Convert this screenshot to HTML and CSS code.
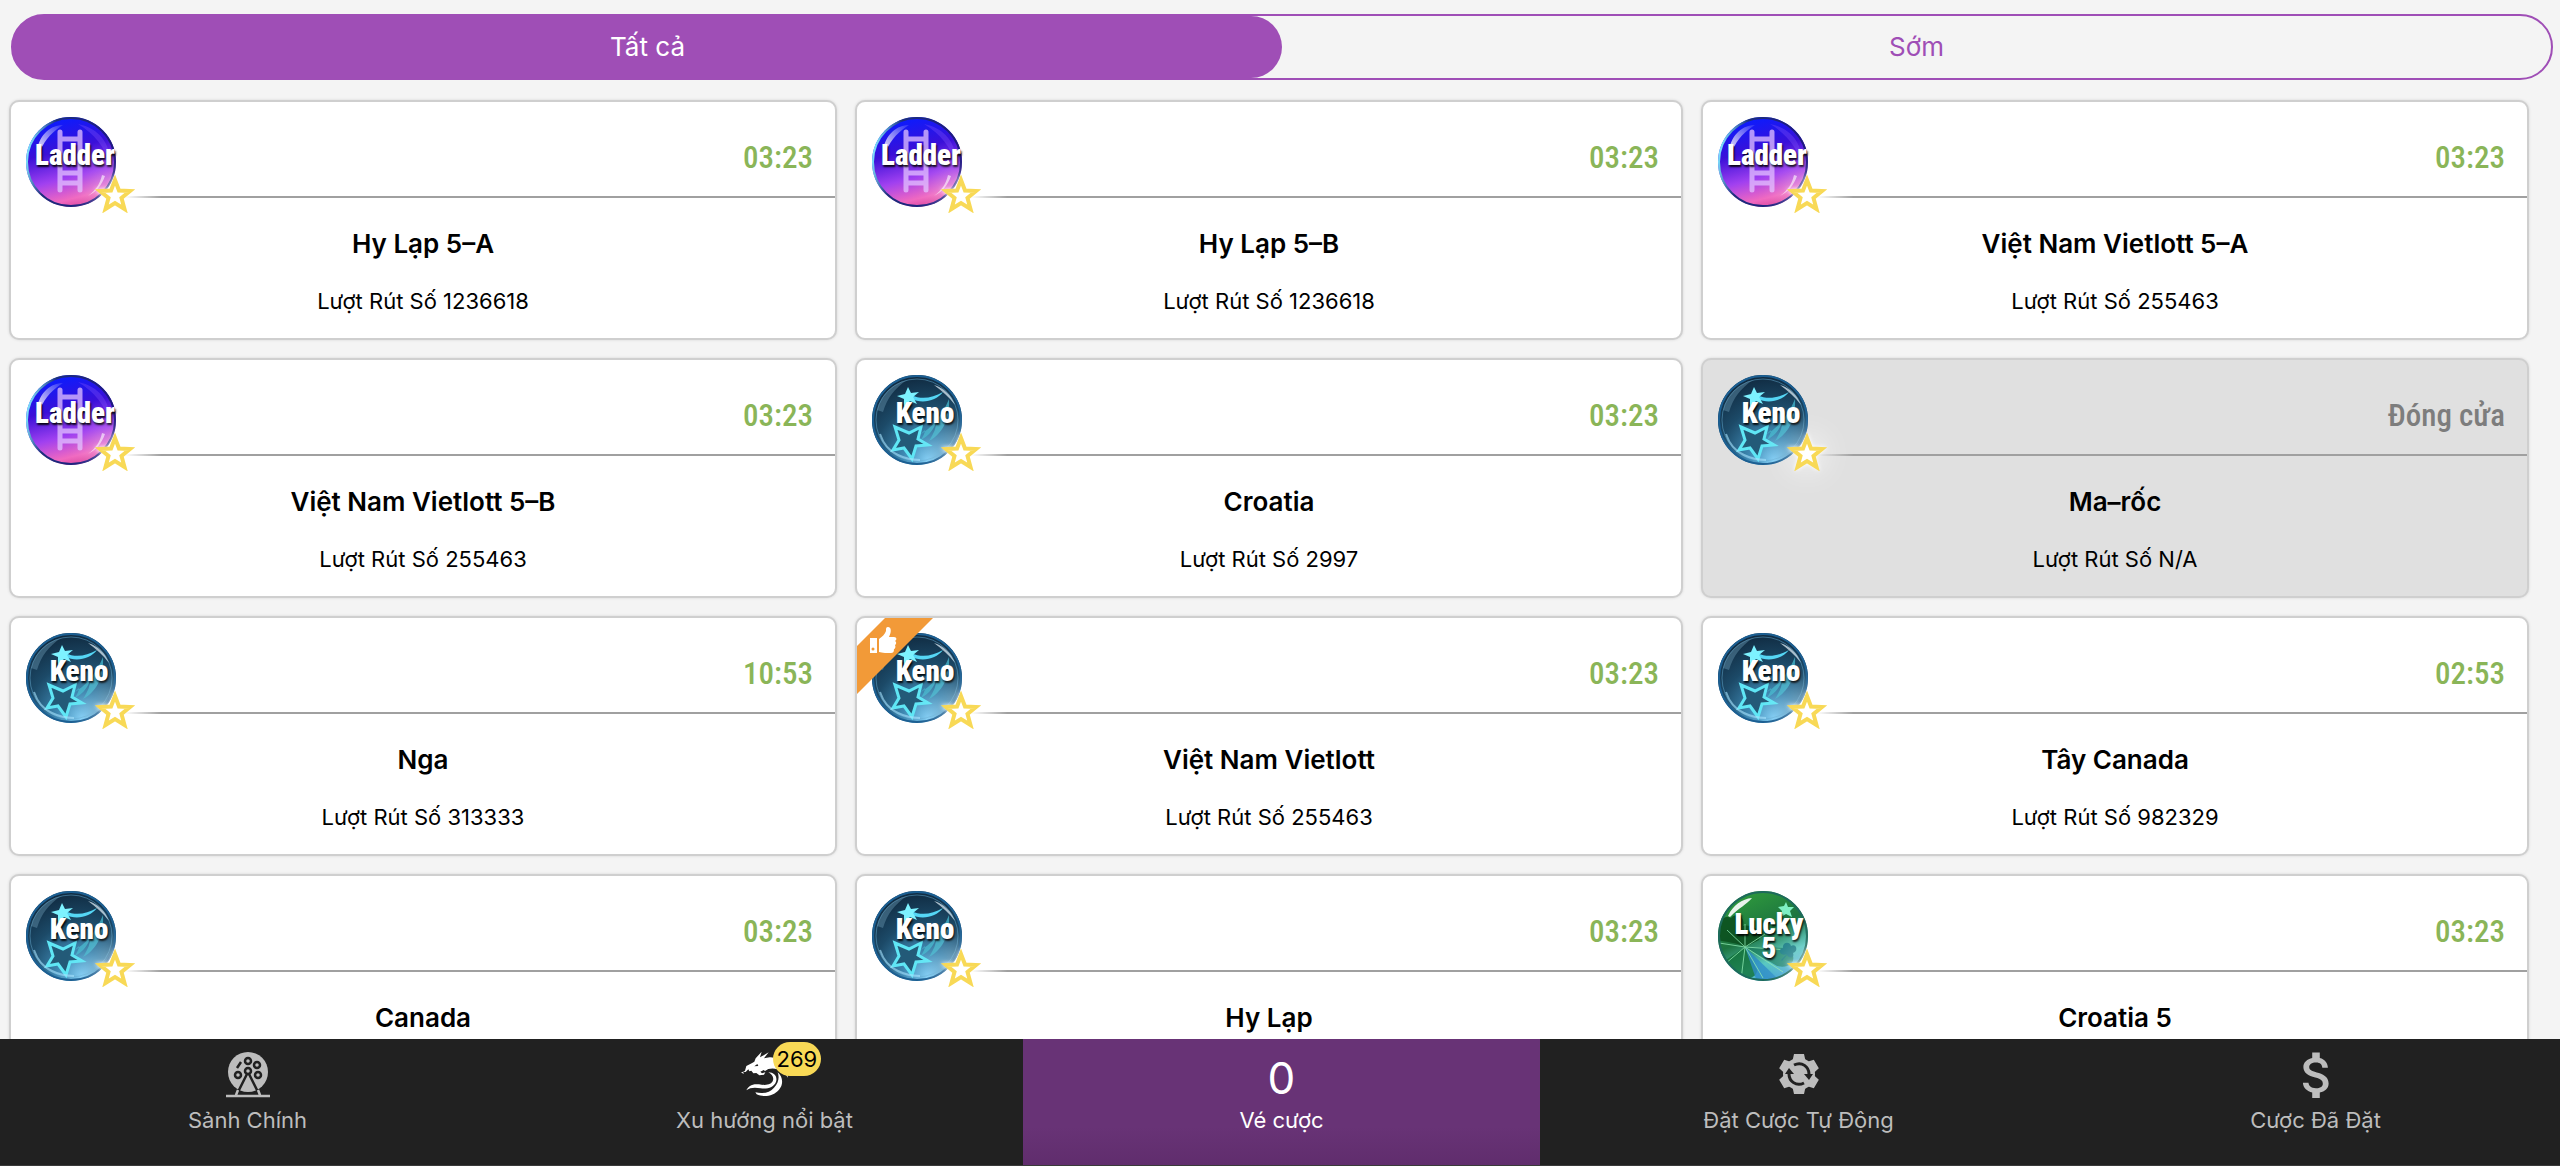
FILE: index.html
```html
<!DOCTYPE html>
<html lang="vi">
	<head>
		<meta charset="UTF-8" />
		<meta name="viewport" content="width=device-width, initial-scale=1.0" />
		<title>Xổ số</title>
		<link rel="stylesheet" href="styles.css">
	</head>
	<body>
		<!-- shared icons -->
		<svg class="sprite" aria-hidden="true">
			<defs>
				<linearGradient id="ladder-bg" x1="0.4" y1="0" x2="0.65" y2="1">
					<stop offset="0" stop-color="#0a1cff" />
					<stop offset="0.35" stop-color="#3a10d8" />
					<stop offset="0.65" stop-color="#a040f0" />
					<stop offset="0.88" stop-color="#f068c0" />
					<stop offset="1" stop-color="#d8409a" />
				</linearGradient>
				<radialGradient id="keno-bg" cx="0.62" cy="0.95" r="0.95">
					<stop offset="0" stop-color="#7fcdf5" />
					<stop offset="0.3" stop-color="#3d86b0" />
					<stop offset="0.65" stop-color="#1c4a68" />
					<stop offset="1" stop-color="#102a40" />
				</radialGradient>
				<linearGradient id="lucky-bg" x1="0.3" y1="0" x2="0.75" y2="1">
					<stop offset="0" stop-color="#2f9a3c" />
					<stop offset="0.45" stop-color="#1c7440" />
					<stop offset="0.75" stop-color="#58c8c0" />
					<stop offset="1" stop-color="#3a9ad8" />
				</linearGradient>
				<linearGradient id="rim" x1="0" y1="0.4" x2="1" y2="0.6">
					<stop offset="0" stop-color="#7fe4ff" />
					<stop offset="0.25" stop-color="#1c2f7c" />
					<stop offset="1" stop-color="#1d1680" />
				</linearGradient>
				<linearGradient id="shine" x1="0" y1="1" x2="1" y2="0">
					<stop offset="0" stop-color="#fff" stop-opacity="0.9" />
					<stop offset="1" stop-color="#fff" stop-opacity="0.1" />
				</linearGradient>
				<clipPath id="ball-clip"><circle cx="46" cy="46" r="44" /></clipPath>
			</defs>

			<symbol id="ball-ladder" viewBox="0 0 92 92">
				<circle cx="46" cy="46" r="45" fill="url(#ladder-bg)" />
				<circle cx="46" cy="46" r="44" fill="none" stroke="url(#rim)" stroke-width="2" />
				<path d="M53 8C74 12 86 28 85 48 80 32 70 18 53 8z" fill="#8a5cff" opacity="0.3" />
				<path d="M12 34C15 18 26 9 38 9 29 15 20 22 15 36z" fill="url(#shine)" />
				<path d="M80 60c-3 9-9 16-17 20 8-6 12-12 14-21z" fill="#fff" opacity="0.6" />
				<path d="M35 16v58M55 16v58M35 23h20M35 57h20M35 67h20" fill="none" stroke="#e3c2ff" stroke-width="5" stroke-linecap="round" opacity="0.75" />
			</symbol>

			<symbol id="ball-keno" viewBox="0 0 92 92">
				<circle cx="46" cy="46" r="45" fill="url(#keno-bg)" />
				<circle cx="46" cy="46" r="44" fill="none" stroke="#1c5f92" stroke-width="2" />
				<circle cx="46" cy="46" r="41" fill="none" stroke="#63a9cf" stroke-width="1" opacity="0.5" />
				<path d="M6 36C10 20 22 9 36 6 24 14 16 24 12 38z" fill="#5d8ba5" opacity="0.5" />
				<path d="M63 11c10 3 17 10 21 20-6-8-13-14-21-20z" fill="#e8f6ff" opacity="0.7" />
				<path d="M40 21c11 5 21 3 32-3-7 9-20 12-32 7z" fill="#55d6f5" />
				<path d="M37 13l3 6 8-1-6 5 4 7-7-3-6 6 0-8-7-3 8-2z" fill="#7df2ff" />
				<path d="M47 62c14-8 24-20 31-37 1 18-5 34-20 42 5-8 7-13 7-18-4 9-8 13-15 17 2-4 4-7 4-10-3 3-5 5-7 6z" fill="#45b9cf" opacity="0.75" />
				<path d="M24 53l14 6 12-6-3 12 10 6-12 1-4 13-8-11-11 2 6-10z" fill="#235a78" stroke="#5fe6f5" stroke-width="3" />
				<path d="M9 60c3 9 9 17 18 21 8 4 16 5 22 5" fill="none" stroke="#a9e4ff" stroke-width="2" opacity="0.6" />
			</symbol>

			<symbol id="ball-lucky" viewBox="0 0 92 92">
				<circle cx="46" cy="46" r="45" fill="url(#lucky-bg)" />
				<g clip-path="url(#ball-clip)">
					<path d="M2 46c-4-12 4-22 12-18 4-6 15-2 12 8 8-2 20 4 16 14l-14 7C18 52 8 52 0 50z" fill="#0b4d1d" opacity="0.85" />
					<path d="M28 57L70 58C82 66 76 80 60 76z" fill="#1a7a5c" opacity="0.7" />
					<path d="M28 57L6 72c0 12 12 18 20 14 8 4 14 0 14-6z" fill="#127038" opacity="0.8" />
					<path d="M28 57l32 31-20 4z" fill="#2d8cc8" opacity="0.8" />
					<path d="M28 57V34M28 57L10 40M28 57L2 53M28 57L8 74M28 57L24 90M28 57L46 88M28 57L66 82M28 57L48 44M28 57L72 60" stroke="#8be6b0" stroke-width="1" opacity="0.8" />
				</g>
				<circle cx="46" cy="46" r="44" fill="none" stroke="#1d6a5c" stroke-width="2" />
				<path d="M11 26C16 15 25 9 35 8 30 14 22 18 13 27z" fill="#fff" opacity="0.9" />
				<path d="M69 12l2 5 6 0-4 4 2 6-6-3-5 3 1-6-4-4 6-1z" fill="#7ff0c4" />
				<path d="M70 64c-7 3-10-5-4-6-1-6 7-7 8-2 5-3 8 5 2 7 2 5-4 6-6 2l-5 6-1-1z" fill="#1d7f88" />
			</symbol>

			<symbol id="icon-star" viewBox="0 0 40 38">
				<path d="M20 5l4 10.500 11 .5-8.500 7 3 11L20 28l-9.500 6 3-11L5 16l11-.5z" fill="#fff" stroke="#f8d956" stroke-width="4" />
			</symbol>

			<symbol id="icon-thumb" viewBox="0 0 28 28">
				<path d="M1 12h7v15H1z" fill="#fff" />
				<circle cx="4" cy="23" r="1.500" fill="#f29a38" />
				<path d="M10 13c3-2 6-5 7-8 0-3 0-4 2-4 3 0 4 4 1 10h5c3 0 3 3 1 4 2 1 1 4 0 4 1 2 0 4-1 4 0 3-1 4-3 4h-6c-3 0-4-1-6-1z" fill="#fff" />
			</symbol>

			<symbol id="icon-wheel" viewBox="0 0 48 48">
				<circle cx="24" cy="22" r="20" fill="currentColor" />
				<g fill="none" stroke="#212121" stroke-width="2.500">
					<circle cx="24" cy="11" r="3" />
					<circle cx="33" cy="15" r="3" />
					<circle cx="34" cy="25" r="3" />
					<circle cx="14" cy="25" r="3" />
					<circle cx="24" cy="21" r="3" />
					<path d="M13 18l4-6M23 24l-9 18M25 24l9 18" />
				</g>
				<path d="M14 40l-2 5M34 40l2 5M2 46h44" fill="none" stroke="currentColor" stroke-width="2.500" />
			</symbol>

			<symbol id="icon-dragon" viewBox="30 45 144 144">
				<path d="M30 113l12-6 4-14 16-8 8-5 4-10 18-20-5 17 26-15-14 18 17-3c18-1 32 10 40 24l6 6-4-1c8 8 13 19 12 32-4-9-10-16-18-20-12-7-27-10-40-6l-10 6-4-3-10 5 5 5 10-3-4 7-14 2-9-7-9 1-6-8-6 2-3-6-8 8-8-1 3 6zM70 94l12-1-3-6z" fill="currentColor" fill-rule="evenodd" />
				<path d="M112 112c18 0 28 13 23 28-6 17-26 23-46 20-16-3-32-3-43 6 5-12 18-21 38-18 20 4 38 2 42-12 3-10-4-19-14-24z" fill="currentColor" />
				<path d="M140 112c16 14 18 36 4 52-17 20-46 24-67 14l-4-6c24 6 44 0 56-14 13-14 17-30 11-46z" fill="currentColor" />
			</symbol>

			<symbol id="icon-auto" viewBox="0 0 48 48">
				<g fill="currentColor">
					<circle cx="24" cy="24" r="16" />
					<path id="teeth" d="M19 4h10l2 9h-14zM19 44h10l2-9h-14z" />
					<use href="#teeth" transform="rotate(60 24 24)" />
					<use href="#teeth" transform="rotate(120 24 24)" />
				</g>
				<path d="M19 15c8-4 15 2 15 9M29 33c-8 4-15-2-15-9" fill="none" stroke="#212121" stroke-width="3" />
				<path d="M29 24h9l-4 6zM19 24h-9l4-6z" fill="#212121" />
			</symbol>

			<symbol id="icon-dollar" viewBox="2 2 19 19">
				<path d="M11.800 10.900c-2.270-.59-3-1.200-3-2.150 0-1.090 1.010-1.850 2.700-1.850 1.780 0 2.440.85 2.500 2.100h2.210c-.07-1.720-1.120-3.300-3.210-3.810V3h-3v2.160c-1.940.42-3.500 1.680-3.500 3.610 0 2.310 1.910 3.460 4.700 4.130 2.500.6 3 1.480 3 2.410 0 .69-.49 1.790-2.700 1.790-2.060 0-2.870-.92-2.980-2.100h-2.200c.12 2.190 1.760 3.420 3.680 3.830V21h3v-2.150c1.950-.37 3.500-1.500 3.500-3.550 0-2.840-2.430-3.810-4.700-4.400z" fill="currentColor" />
			</symbol>
		</svg>

		<main class="content">
			<div class="tabs" role="tablist">
				<button class="tab active" role="tab" aria-selected="true">Tất cả</button>
				<button class="tab" role="tab" aria-selected="false">Sớm</button>
			</div>

			<div class="games">
				<article class="card">
					<div class="card-head">
						<div class="logo">
							<svg class="ball"><use href="#ball-ladder" /></svg>
							<span class="ball-text ladder">Ladder</span>
							<button class="star" aria-label="Yêu thích"><svg><use href="#icon-star" /></svg></button>
						</div>
						<time class="timer">03:23</time>
					</div>
					<h2 class="name">Hy Lạp 5–A</h2>
					<p class="draw">Lượt Rút Số 1236618</p>
				</article>

				<article class="card">
					<div class="card-head">
						<div class="logo">
							<svg class="ball"><use href="#ball-ladder" /></svg>
							<span class="ball-text ladder">Ladder</span>
							<button class="star" aria-label="Yêu thích"><svg><use href="#icon-star" /></svg></button>
						</div>
						<time class="timer">03:23</time>
					</div>
					<h2 class="name">Hy Lạp 5–B</h2>
					<p class="draw">Lượt Rút Số 1236618</p>
				</article>

				<article class="card">
					<div class="card-head">
						<div class="logo">
							<svg class="ball"><use href="#ball-ladder" /></svg>
							<span class="ball-text ladder">Ladder</span>
							<button class="star" aria-label="Yêu thích"><svg><use href="#icon-star" /></svg></button>
						</div>
						<time class="timer">03:23</time>
					</div>
					<h2 class="name">Việt Nam Vietlott 5–A</h2>
					<p class="draw">Lượt Rút Số 255463</p>
				</article>

				<article class="card">
					<div class="card-head">
						<div class="logo">
							<svg class="ball"><use href="#ball-ladder" /></svg>
							<span class="ball-text ladder">Ladder</span>
							<button class="star" aria-label="Yêu thích"><svg><use href="#icon-star" /></svg></button>
						</div>
						<time class="timer">03:23</time>
					</div>
					<h2 class="name">Việt Nam Vietlott 5–B</h2>
					<p class="draw">Lượt Rút Số 255463</p>
				</article>

				<article class="card">
					<div class="card-head">
						<div class="logo">
							<svg class="ball"><use href="#ball-keno" /></svg>
							<span class="ball-text">Keno</span>
							<button class="star" aria-label="Yêu thích"><svg><use href="#icon-star" /></svg></button>
						</div>
						<time class="timer">03:23</time>
					</div>
					<h2 class="name">Croatia</h2>
					<p class="draw">Lượt Rút Số 2997</p>
				</article>

				<article class="card closed">
					<div class="card-head">
						<div class="logo">
							<svg class="ball"><use href="#ball-keno" /></svg>
							<span class="ball-text">Keno</span>
							<button class="star" aria-label="Yêu thích"><svg><use href="#icon-star" /></svg></button>
						</div>
						<span class="timer">Đóng cửa</span>
					</div>
					<h2 class="name">Ma–rốc</h2>
					<p class="draw">Lượt Rút Số N/A</p>
				</article>

				<article class="card">
					<div class="card-head">
						<div class="logo">
							<svg class="ball"><use href="#ball-keno" /></svg>
							<span class="ball-text">Keno</span>
							<button class="star" aria-label="Yêu thích"><svg><use href="#icon-star" /></svg></button>
						</div>
						<time class="timer">10:53</time>
					</div>
					<h2 class="name">Nga</h2>
					<p class="draw">Lượt Rút Số 313333</p>
				</article>

				<article class="card">
					<div class="card-head">
						<div class="logo">
							<svg class="ball"><use href="#ball-keno" /></svg>
							<span class="ball-text">Keno</span>
							<button class="star" aria-label="Yêu thích"><svg><use href="#icon-star" /></svg></button>
						</div>
						<time class="timer">03:23</time>
					</div>
					<h2 class="name">Việt Nam Vietlott</h2>
					<p class="draw">Lượt Rút Số 255463</p>
					<div class="ribbon"><svg class="thumb"><use href="#icon-thumb" /></svg></div>
				</article>

				<article class="card">
					<div class="card-head">
						<div class="logo">
							<svg class="ball"><use href="#ball-keno" /></svg>
							<span class="ball-text">Keno</span>
							<button class="star" aria-label="Yêu thích"><svg><use href="#icon-star" /></svg></button>
						</div>
						<time class="timer">02:53</time>
					</div>
					<h2 class="name">Tây Canada</h2>
					<p class="draw">Lượt Rút Số 982329</p>
				</article>

				<article class="card">
					<div class="card-head">
						<div class="logo">
							<svg class="ball"><use href="#ball-keno" /></svg>
							<span class="ball-text">Keno</span>
							<button class="star" aria-label="Yêu thích"><svg><use href="#icon-star" /></svg></button>
						</div>
						<time class="timer">03:23</time>
					</div>
					<h2 class="name">Canada</h2>
				</article>

				<article class="card">
					<div class="card-head">
						<div class="logo">
							<svg class="ball"><use href="#ball-keno" /></svg>
							<span class="ball-text">Keno</span>
							<button class="star" aria-label="Yêu thích"><svg><use href="#icon-star" /></svg></button>
						</div>
						<time class="timer">03:23</time>
					</div>
					<h2 class="name">Hy Lạp</h2>
				</article>

				<article class="card">
					<div class="card-head">
						<div class="logo">
							<svg class="ball"><use href="#ball-lucky" /></svg>
							<span class="ball-text lucky">Lucky<br />5</span>
							<button class="star" aria-label="Yêu thích"><svg><use href="#icon-star" /></svg></button>
						</div>
						<time class="timer">03:23</time>
					</div>
					<h2 class="name">Croatia 5</h2>
				</article>
			</div>
		</main>

		<nav class="bottom-nav">
			<a class="nav-item" href="#lobby">
				<svg class="nav-icon"><use href="#icon-wheel" /></svg>
				<span>Sảnh Chính</span>
			</a>
			<a class="nav-item" href="#trend">
				<span class="icon-wrap">
					<svg class="nav-icon"><use href="#icon-dragon" /></svg>
					<span class="badge">269</span>
				</span>
				<span>Xu hướng nổi bật</span>
			</a>
			<a class="nav-item active" href="#slip">
				<span class="count">0</span>
				<span>Vé cược</span>
			</a>
			<a class="nav-item" href="#auto">
				<svg class="nav-icon"><use href="#icon-auto" /></svg>
				<span>Đặt Cược Tự Động</span>
			</a>
			<a class="nav-item" href="#bets">
				<svg class="nav-icon"><use href="#icon-dollar" /></svg>
				<span>Cược Đã Đặt</span>
			</a>
		</nav>
	</body>
</html>
```
FILE: styles.css
```css
* {
	box-sizing: border-box;
}
body {
	display: flex;
	flex-direction: column;
	height: 100vh;
	margin: 0;
	overflow: hidden;
	font-family: Inter, 'Liberation Sans', sans-serif;
	font-size: 22px;
	line-height: 28px;
	background-color: #f4f4f4;
	color: #000;
}
button {
	padding: 0;
	border: none;
	background: none;
	font: inherit;
	color: inherit;
	cursor: pointer;
}
.sprite {
	position: absolute;
	width: 0;
	height: 0;
}
.content {
	flex: 1;
	min-height: 0;
	overflow: hidden;
	padding: 14px 7px 0 9px;
}

/* tabs */
.tabs {
	display: flex;
	height: 66px;
	margin-left: 2px;
	border: 2px solid #9f4eb6;
	border-radius: 33px;
	background: linear-gradient(90deg, #9f4eb6 40px, transparent 40px);
}
.tab {
	flex: 1;
	border-radius: 33px;
	font-size: 26px;
	color: #9f4eb6;
}
.tab.active {
	background-color: #9f4eb6;
	color: #fff;
}

/* game cards */
.games {
	display: grid;
	grid-template-columns: repeat(3, 1fr);
	gap: 18px;
	margin: 20px 24px 0 0;
}
.card {
	position: relative;
	height: 240px;
	border: 2px solid #cfcfcf;
	border-radius: 10px;
	background-color: #fff;
	box-shadow: 0 0 3px rgba(0, 0, 0, 0.12);
	text-align: center;
}
.card.closed {
	background-color: #e0e0e0;
}
.card-head {
	display: flex;
	justify-content: space-between;
	height: 96px;
	padding: 14px 22px 0 14px;
	/* divider starts to the right of the star */
	background: linear-gradient(90deg, transparent 112px, #a0a0a0 150px) bottom / 100% 2px no-repeat;
}
.logo {
	position: relative;
	width: 92px;
	height: 92px;
}
.ball {
	display: block;
	width: 92px;
	height: 92px;
}
.ball-text {
	position: absolute;
	top: 24px;
	left: 16px;
	width: 76px;
	font-family: 'Roboto Condensed', Roboto, sans-serif;
	font-size: 29px;
	line-height: 30px;
	font-weight: 900;
	color: #fff;
	text-shadow: 1px 2px 2px rgba(0, 0, 0, 0.9);
}
.ball-text.ladder {
	left: 10px;
}
.ball-text.lucky {
	top: 22px;
	left: 14px;
	line-height: 24px;
}
.star {
	position: absolute;
	right: -18px;
	bottom: -5px;
	width: 40px;
	height: 38px;
	filter: drop-shadow(0 0 2px #fff) drop-shadow(0 0 16px #fff);
}
.star svg {
	display: block;
	width: 40px;
	height: 38px;
}
.timer {
	padding-top: 28px;
	font-family: 'Roboto Condensed', Roboto, sans-serif;
	font-size: 31px;
	font-weight: 500;
	color: #8ab558;
}
.closed .timer {
	color: #7d7d7d;
}
.name {
	margin: 32px 0 0;
	font-size: 26px;
	font-weight: 600;
}
.draw {
	margin: 29px 0 0;
}
.ribbon {
	position: absolute;
	top: 0;
	left: 0;
	width: 76px;
	height: 76px;
	padding: 8px 0 0 12px;
	background-color: #f29a38;
	clip-path: polygon(28px 0, 100% 0, 0 100%, 0 28px);
}
.thumb {
	display: block;
	width: 28px;
	height: 28px;
}

/* bottom bar */
.bottom-nav {
	display: flex;
	height: 127px;
	margin: 0 -14px 0 -11px;
	border-bottom: 1px solid #3a3a3a;
	background-color: #212121;
}
.nav-item {
	flex: 1;
	display: flex;
	flex-direction: column;
	align-items: center;
	gap: 8px;
	padding-top: 11px;
	color: #bdbdbd;
	text-decoration: none;
}
.nav-item.active {
	background: linear-gradient(#683376 70%, #602d6d);
	color: #fff;
}
.nav-icon {
	display: block;
	width: 48px;
	height: 48px;
}
.icon-wrap {
	position: relative;
	color: #fff;
}
.badge {
	position: absolute;
	top: -8px;
	left: 32px;
	padding: 3px 4px;
	border-radius: 17px;
	background-color: #f8d956;
	color: #000;
}
.count {
	height: 48px;
	font-size: 44px;
	line-height: 56px;
}
```
